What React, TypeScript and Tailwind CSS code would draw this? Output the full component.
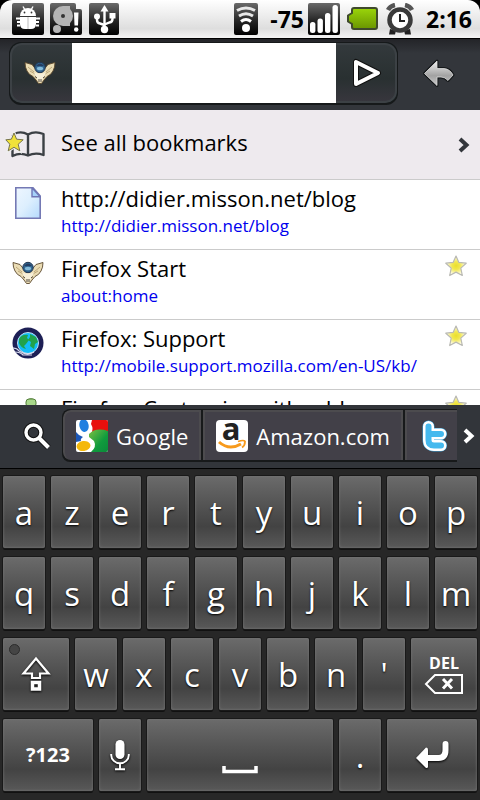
import type { ReactNode } from "react";
import clsx from "clsx";

type BookmarkItem = {
  title: string;
  href: string;
  url?: string;
  icon: ReactNode;
  starred?: boolean;
};

type KeyDef = {
  label: string;
  span?: string;
  content?: ReactNode;
};

const BADGE_STOPS = (
  <>
    <stop offset="0" stopColor="#6a6a6a" />
    <stop offset="0.55" stopColor="#262626" />
    <stop offset="1" stopColor="#000" />
  </>
);

const DebugIcon = () => (
  <svg viewBox="0 0 32 32" className="h-8 w-8">
    <linearGradient id="badge-debug" x1="0" y1="0" x2="0" y2="1">
      {BADGE_STOPS}
    </linearGradient>
    <rect width="32" height="32" rx="2" fill="url(#badge-debug)" />
    <g stroke="#fff" strokeWidth="1.4">
      <path d="M11 3.500l2 3.500M21 3.500l-2 3.500" />
      <path d="M4 15.500h4M5 19h3M5 22.500h3M28 15.500h-4M27 19h-3M27 22.500h-3" strokeWidth="1.800" />
    </g>
    <path d="M8 13a8 8 0 0 1 16 0z" fill="#fff" />
    <path d="M8 14h16v7q0 5-5 5h-6q-5 0-5-5z" fill="#fff" />
    <path d="M16 14v12" stroke="#bbb" />
    <circle cx="12.500" cy="9.500" r="0.900" fill="#333" />
    <circle cx="19.500" cy="9.500" r="0.900" fill="#333" />
  </svg>
);

const StorageIcon = () => (
  <svg viewBox="0 0 32 32" className="h-8 w-8">
    <linearGradient id="badge-storage" x1="0" y1="0" x2="0" y2="1">
      {BADGE_STOPS}
    </linearGradient>
    <path
      d="M2 0h22a2 2 0 0 1 2 2v4h4a2 2 0 0 1 2 2v22a2 2 0 0 1-2 2H2a2 2 0 0 1-2-2V2a2 2 0 0 1 2-2z"
      fill="url(#badge-storage)"
    />
    <circle cx="13" cy="13" r="10" fill="#b4b4b4" />
    <path d="M13 3h7v20h-7z" fill="#b4b4b4" />
    <circle cx="13" cy="13" r="2" fill="#333" />
    <circle cx="7" cy="26" r="4" fill="#b4b4b4" />
    <path d="M24 9.500h4.500l-.5 13h-3.500z" fill="#fff" />
    <circle cx="26.200" cy="26.500" r="2.200" fill="#fff" />
  </svg>
);

const UsbIcon = () => (
  <svg viewBox="0 0 32 32" className="h-8 w-8">
    <linearGradient id="badge-usb" x1="0" y1="0" x2="0" y2="1">
      {BADGE_STOPS}
    </linearGradient>
    <rect x="1" width="30" height="32" rx="2" fill="url(#badge-usb)" />
    <g stroke="#fff" strokeWidth="2.400" fill="none">
      <path d="M16.500 7v20" />
      <path d="M9 14v3q0 3 3 3.500l4.500 1.500M24.500 13v3q0 3-3 3.500l-5 2" />
    </g>
    <path d="M12.500 8.500l4-6.500 4 6.500z" fill="#fff" />
    <circle cx="9" cy="13.500" r="3" fill="#fff" />
    <path d="M21.500 10h6v5.500h-6z" fill="#fff" />
    <circle cx="16.500" cy="26.500" r="3.700" fill="#fff" />
  </svg>
);

const WifiIcon = () => (
  <svg viewBox="0 0 24 32" className="h-8 w-6">
    <linearGradient id="badge-wifi" x1="0" y1="0" x2="0" y2="1">
      {BADGE_STOPS}
    </linearGradient>
    <rect width="24" height="32" rx="2" fill="url(#badge-wifi)" />
    <g stroke="#e8e8e8" strokeWidth="3" fill="none">
      <path d="M3 7.500q9-5 18 0" />
      <path d="M5 13q7-4.500 14 0" />
      <path d="M7 18.500q5-4 10 0" stroke="#fff" />
    </g>
    <circle cx="12" cy="25" r="4" fill="#fff" />
  </svg>
);

const SignalIcon = () => (
  <svg viewBox="0 0 32 32" className="h-8 w-8">
    <linearGradient id="badge-signal" x1="0" y1="0" x2="0" y2="1">
      {BADGE_STOPS}
    </linearGradient>
    <rect width="32" height="32" rx="2" fill="url(#badge-signal)" />
    <g fill="#fff">
      <rect x="2" y="19" width="5.400" height="11" rx="2.500" />
      <rect x="9.500" y="15.500" width="5.400" height="14.500" rx="2.500" />
      <rect x="17" y="10" width="5.400" height="20" rx="2.500" />
      <rect x="24.500" y="2" width="5.400" height="28" rx="2.500" />
    </g>
  </svg>
);

const BatteryIcon = () => (
  <svg viewBox="0 0 32 32" className="h-8 w-8">
    <linearGradient id="battery" x1="0" y1="0" x2="0" y2="1">
      <stop offset="0" stopColor="#9bd60b" />
      <stop offset="1" stopColor="#6a9500" />
    </linearGradient>
    <path
      d="M8 5h21q2 0 2 2v17q0 2-2 2H8q-2 0-2-2v-3l-4-2.500v-6L6 10V7q0-2 2-2z"
      fill="url(#battery)"
      stroke="#3f4a2c"
      strokeWidth="2"
    />
  </svg>
);

const AlarmIcon = () => (
  <svg viewBox="0 0 32 32" className="h-8 w-8">
    <path d="M6 26l-1 5.500h6l1-4M26 26l1 5.500h-6l-1-4" fill="#222" />
    <path d="M4 7q2-4 7-5M28 7q-2-4-7-5" stroke="#555" strokeWidth="4.500" fill="none" />
    <circle cx="16" cy="17" r="10.500" fill="#fff" stroke="#3a3a3a" strokeWidth="4.500" />
    <path d="M16 11v7h5" stroke="#222" strokeWidth="2" fill="none" />
  </svg>
);

const WingsIcon = () => (
  <svg viewBox="0 0 32 24" className="h-6 w-8">
    <path
      d="M1 1.500l7 2 4 5q4 3 8 0l4-5 7-2q0 5-2 8.500-2 4-6 5.500L20 19l-2.500 3.500h-3L12 19l-3-3.500Q5 14 3 10 1 6.500 1 1.500z"
      fill="#eadcb4"
      stroke="#5a472c"
      strokeWidth="0.900"
    />
    <path
      d="M4 6l6 5M6 10l5 3M28 6l-6 5M26 10l-5 3"
      stroke="#b8a174"
      strokeWidth="0.900"
    />
    <circle cx="16" cy="6.500" r="5.200" fill="#31648e" stroke="#233650" />
    <path d="M12 5q4-5 8 0z" fill="#243d61" />
    <ellipse cx="16" cy="7.500" rx="3.200" ry="1.800" fill="#83bad9" />
    <path d="M10 11.500q6 2 12 0l-3 6-1.500 3.500h-3L13 17.500z" fill="#f7efd8" />
    <path d="M11 15.500l2 1.500M21 15.500l-2 1.500M15 18v3M17 18v3" stroke="#514737" />
  </svg>
);

const PlayIcon = () => (
  <svg viewBox="0 0 32 32" className="h-8 w-8">
    <path d="M6 5v22L28 16z" fill="none" stroke="#111" strokeWidth="6" strokeLinejoin="round" />
    <path d="M6 5v22L28 16z" fill="none" stroke="#fff" strokeWidth="4" strokeLinejoin="round" />
  </svg>
);

const BackIcon = () => (
  <svg viewBox="0 0 32 32" className="h-8 w-8">
    <linearGradient id="back" x1="0" y1="0" x2="0" y2="1">
      <stop offset="0" stopColor="#f0f0f0" />
      <stop offset="0.600" stopColor="#a2a2a2" />
      <stop offset="1" stopColor="#c8c8c8" />
    </linearGradient>
    <path
      d="M1.500 15.500L14 3v7.500h7q6 .5 9 6.500l-5 5.500q-3-3.500-7-3.500h-4v8.500z"
      fill="#15181a"
      stroke="#15181a"
      strokeWidth="3"
      strokeLinejoin="round"
    />
    <path
      d="M1.500 15.500L14 3v7.500h7q6 .5 9 6.500l-5 5.500q-3-3.500-7-3.500h-4v8.500z"
      fill="url(#back)"
      stroke="#dcdcdc"
      strokeWidth="0.800"
      strokeLinejoin="round"
    />
  </svg>
);

const BookmarksIcon = () => (
  <svg viewBox="0 0 42 28" className="h-7 w-[42px]">
    <path
      d="M9 3q7-3.500 14 .5Q30-.5 38.500 3v21q-8-3-15.500.5Q15.500 21 7.500 25V5zM23 3.500V24"
      fill="none"
      stroke="#3b4044"
      strokeWidth="2.400"
      strokeLinejoin="round"
    />
    <path
      d="M9 2l2.600 6.200 6.600.6-5 4.400 1.600 6.600L9 16.300l-5.800 3.500 1.600-6.600-5-4.400 6.600-.6z"
      fill="#f2e53c"
      stroke="#eee"
      strokeWidth="3"
    />
    <path
      d="M9 2l2.600 6.200 6.600.6-5 4.400 1.600 6.600L9 16.300l-5.800 3.500 1.600-6.600-4-4.400 5.600-.6z"
      fill="#f0e23a"
      stroke="#77734e"
      strokeWidth="1"
    />
  </svg>
);

const PageIcon = () => (
  <svg viewBox="0 0 26 32" className="h-8 w-[26px]">
    <linearGradient id="page" x1="0" y1="0" x2="1" y2="1">
      <stop offset="0" stopColor="#eef6ff" />
      <stop offset="0.500" stopColor="#ddeffe" />
      <stop offset="1" stopColor="#b5dafc" />
    </linearGradient>
    <path d="M.8.800h17.200l7.200 8.200v22.200H.8z" fill="url(#page)" stroke="#7479b4" strokeWidth="1.600" />
    <path d="M17 .800v9h8.200z" fill="#a6d2fa" stroke="#6f75b5" strokeWidth="1.400" />
  </svg>
);

const GlobeIcon = () => (
  <svg viewBox="0 0 32 32" className="h-8 w-8">
    <circle cx="16" cy="16" r="15.500" fill="#1d1f55" />
    <circle cx="16" cy="16" r="10.500" fill="#12bdf7" stroke="#bfe0f2" />
    <path
      d="M7 12q3-5 9-4l-1 3 2 2-3 4-2 2 2 3q-5-1-7-6zM18 7l6 3 2 5-3 2-1 5-4-3 1-4-3-2 2-3z"
      fill="#21a24b"
    />
    <path d="M1 21q4 0 6 3 8 5 15 1M3 25q5 0 8 3h9" fill="none" stroke="#d9dcee" strokeWidth="1.200" />
  </svg>
);

const AddonsIcon = () => (
  <svg viewBox="0 0 32 32" className="h-8 w-8">
    <path
      d="M3 13h12V4q4-4 8 0v9h5v8q-6-1-6 3t6 3v4H3z"
      fill="#9fce7c"
      stroke="#55803b"
      strokeWidth="1.500"
    />
    <rect x="14" y="2" width="10" height="8" rx="3" fill="#a9d88b" stroke="#55803b" />
  </svg>
);

const StarIcon = () => (
  <svg viewBox="0 0 24 24" className="h-6 w-6">
    <radialGradient id="star">
      <stop offset="0" stopColor="#eadf2c" />
      <stop offset="0.400" stopColor="#f1e750" />
      <stop offset="0.900" stopColor="#fdfbe0" />
    </radialGradient>
    <path
      d="M12 2l2.900 6.400 7.300.8-5.400 4.900 1.500 7.400-6.300-3.400-6.300 3.400 1.500-7.400-5.400-4.900 7.300-.8z"
      fill="url(#star)"
      stroke="#b9b9b3"
      strokeWidth="1.200"
      strokeLinejoin="round"
    />
  </svg>
);

const ChevronIcon = ({ className }: { className: string }) => (
  <svg viewBox="0 0 12 16" className={clsx("h-4 w-3", className)}>
    <path d="M2 2l6.500 6L2 14" fill="none" stroke="currentColor" strokeWidth="4" />
  </svg>
);

const SearchIcon = () => (
  <svg viewBox="0 0 28 28" className="h-7 w-7">
    <g fill="none" stroke="#111">
      <circle cx="10.500" cy="10.500" r="7.500" strokeWidth="5.500" />
      <path d="M16 16l9.500 9.500" strokeWidth="6" />
    </g>
    <g fill="none" stroke="#fff">
      <circle cx="10.500" cy="10.500" r="7.500" strokeWidth="3.400" />
      <path d="M16 16l9.500 9.500" strokeWidth="4" />
    </g>
  </svg>
);

const GoogleIcon = () => (
  <svg viewBox="0 0 32 32" className="h-8 w-8">
    <clipPath id="google-clip">
      <rect width="32" height="32" rx="2" />
    </clipPath>
    <linearGradient id="google-green" x1="0" y1="0" x2="1" y2="1">
      <stop offset="0" stopColor="#7cc043" />
      <stop offset="0.600" stopColor="#109b3d" />
      <stop offset="1" stopColor="#0b8a3a" />
    </linearGradient>
    <g clipPath="url(#google-clip)">
      <rect width="32" height="32" fill="#fff" />
      <path d="M16 0h16v14H15q3-5 0-10z" fill="#e8100c" />
      <path d="M13 14q7-7 19-3v21H15q6-5 3-11l-5-4z" fill="url(#google-green)" />
      <path d="M0 12q3 4 7 5-3 2-2 4l-5 1z" fill="#1c57b8" />
      <ellipse cx="8" cy="5.500" rx="4.600" ry="6.500" fill="#1f7fe0" transform="rotate(-12 8 5.500)" />
      <ellipse cx="7.500" cy="26" rx="7" ry="5" fill="#f4b80c" transform="rotate(-8 7.500 26)" />
    </g>
  </svg>
);

const AmazonIcon = () => (
  <svg viewBox="0 0 32 32" className="h-8 w-8">
    <rect width="32" height="32" rx="4" fill="#fff" />
    <text
      x="15"
      y="20"
      textAnchor="middle"
      className="font-['Open_Sans','Noto_Sans',sans-serif] text-[31px] font-bold"
      fill="#222"
    >
      a
    </text>
    <path d="M3 22q10 9 22 2" fill="none" stroke="#f79a1c" strokeWidth="3" />
    <path d="M22 21.500q6-2 7 0 0 4-3 6" fill="none" stroke="#f79a1c" strokeWidth="1.800" />
  </svg>
);

const TwitterIcon = () => (
  <svg viewBox="0 0 32 32" className="h-8 w-8">
    <g fill="none" strokeLinecap="round" strokeLinejoin="round">
      <path d="M10.500 6.500V20q0 5.500 5.500 5.500h7M10.500 14H23" stroke="#3aa4dc" strokeWidth="12" />
      <path d="M10.500 6.500V20q0 5.500 5.500 5.500h7M10.500 14H23" stroke="#fff" strokeWidth="11" />
      <path d="M10.500 6.500V20q0 5.500 5.500 5.500h7M10.500 14H23" stroke="#45b9ee" strokeWidth="6" />
    </g>
  </svg>
);

const ShiftIcon = () => (
  <svg viewBox="0 0 32 36" className="h-9 w-8 drop-shadow-[0_1px_1px_#000]">
    <path d="M16 2.500L3.500 17.500H12V22h8v-4.500h8.500z" fill="none" stroke="#fff" strokeWidth="2.200" />
    <rect x="12.500" y="26.500" width="7" height="6.500" fill="none" stroke="#fff" strokeWidth="3.500" />
  </svg>
);

const DeleteIcon = () => (
  <svg viewBox="0 0 40 22" className="h-[22px] w-10">
    <path d="M11 2h27v18H11l-9-9z" fill="none" stroke="#fff" strokeWidth="2" />
    <path d="M19 6l9 9.500M28 6l-9 9.500" stroke="#fff" strokeWidth="3" />
  </svg>
);

const MicIcon = () => (
  <svg viewBox="0 0 20 32" className="h-8 w-5 drop-shadow-[0_1px_1px_#000]">
    <rect x="5.500" y="1" width="9" height="19" rx="4.500" fill="#fff" />
    <path d="M1.200 15v1a8.800 8.300 0 0 0 17.600 0v-1M10 24v6M5 30.200h10" fill="none" stroke="#fff" strokeWidth="1.900" />
  </svg>
);

const SpaceIcon = () => (
  <svg viewBox="0 0 36 40" className="h-10 w-9">
    <path d="M2 31v5.500h32V31" fill="none" stroke="#fff" strokeWidth="3.500" />
  </svg>
);

const EnterIcon = () => (
  <svg viewBox="0 0 34 30" className="h-[30px] w-[34px] drop-shadow-[0_1px_1px_#000]">
    <path d="M30.500 4v6q0 8-7 8H10" fill="none" stroke="#fff" strokeWidth="6" strokeLinecap="round" />
    <path d="M1 18L11 7.500q2 0 2 2v17q0 2-2 1.500z" fill="#fff" />
  </svg>
);

const bookmarks: BookmarkItem[] = [
  {
    title: "http://didier.misson.net/blog",
    href: "http://didier.misson.net/blog",
    url: "http://didier.misson.net/blog",
    icon: <PageIcon />,
  },
  {
    title: "Firefox Start",
    href: "about:home",
    url: "about:home",
    icon: <WingsIcon />,
    starred: true,
  },
  {
    title: "Firefox: Support",
    href: "http://mobile.support.mozilla.com/en-US/kb/",
    url: "http://mobile.support.mozilla.com/en-US/kb/",
    icon: <GlobeIcon />,
    starred: true,
  },
  {
    title: "Firefox: Customize with add-ons",
    href: "#addons",
    icon: <AddonsIcon />,
    starred: true,
  },
];

const engines = [
  { name: "Google", icon: <GoogleIcon /> },
  { name: "Amazon.com", icon: <AmazonIcon /> },
  { name: "Twitter", icon: <TwitterIcon /> },
];

const letters = (row: string): KeyDef[] => row.split("").map((label) => ({ label }));

const keys: KeyDef[] = [
  ...letters("azertyuiop"),
  ...letters("qsdfghjklm"),
  {
    label: "Shift",
    span: "col-span-3",
    content: (
      <>
        <span className="absolute top-1.5 left-1.5 h-[11px] w-[11px] rounded-full border border-[#2c2c2c] bg-[#454545]" />
        <ShiftIcon />
      </>
    ),
  },
  ...letters("wxcvbn'"),
  {
    label: "Delete",
    span: "col-span-3",
    content: (
      <span className="flex flex-col items-center">
        <span className="text-base leading-5 font-bold">DEL</span>
        <DeleteIcon />
      </span>
    ),
  },
  {
    label: "?123",
    span: "col-span-4",
    content: <span className="text-xl font-bold">?123</span>,
  },
  { label: "Voice input", content: <MicIcon /> },
  { label: "Space", span: "col-span-8", content: <SpaceIcon /> },
  { label: "." },
  { label: "Enter", span: "col-span-4", content: <EnterIcon /> },
];

const StatusBar = () => (
  <div className="shrink-0 border-b border-black bg-black">
    <div className="flex h-[38px] items-center justify-between rounded-t-xl bg-linear-to-b from-white via-[#dedede] via-75% to-[#f4f4f4] pr-2 pl-3">
      <div className="flex gap-1.5">
        <DebugIcon />
        <StorageIcon />
        <UsbIcon />
      </div>
      <div className="flex items-center gap-1.5">
        <WifiIcon />
        <span className="flex items-center gap-1 pl-1.5 text-[23px] font-bold">
          -75
          <SignalIcon />
        </span>
        <BatteryIcon />
        <AlarmIcon />
        <span className="pl-1 text-[23px] font-bold">2:16</span>
      </div>
    </div>
  </div>
);

const Toolbar = () => (
  <form
    className="flex shrink-0 items-center bg-linear-to-b from-[#232428] to-[#33363b] to-20% pt-[3px] pb-[5px] pl-[9px]"
    onSubmit={(event) => event.preventDefault()}
  >
    <div className="flex h-[63px] min-w-0 flex-1 overflow-hidden rounded-xl border border-b-2 border-[#16191a] bg-[#1d2527]">
      <button
        type="button"
        aria-label="Site information"
        className="flex w-[62px] shrink-0 items-center justify-center rounded-l-xl border-2 border-r-0 border-[#3c4145] bg-linear-to-b from-[#33393c] via-[#293031] via-60% to-[#37363d] pr-1"
      >
        <WingsIcon />
      </button>
      <input
        type="text"
        aria-label="Address"
        className="min-w-0 flex-1 bg-white px-2 text-2xl text-black outline-none"
      />
      <button
        type="submit"
        aria-label="Go"
        className="flex w-[61px] shrink-0 items-center justify-center rounded-r-xl border-2 border-l-0 border-[#3c4145] bg-linear-to-b from-[#33393c] via-[#293031] via-60% to-[#37363d]"
      >
        <PlayIcon />
      </button>
    </div>
    <button type="button" aria-label="Back" className="flex w-[82px] shrink-0 items-center justify-center">
      <BackIcon />
    </button>
  </form>
);

const BookmarkRow = ({ title, href, url, icon, starred }: BookmarkItem) => (
  <li className="border-b border-[#cbcbcb]">
    <a href={href} className="flex h-[69px] pr-3">
      <span className="flex w-[55px] shrink-0 justify-center pt-[7px]">
        <span className="flex h-8 items-center">{icon}</span>
      </span>
      <span className="flex min-w-0 flex-1 flex-col pt-0.5 pl-1.5 whitespace-nowrap">
        <span className="text-[22px] leading-8">{title}</span>
        {url && <span className="text-[17px] leading-6 text-[#0000ee]">{url}</span>}
      </span>
      {starred && (
        <span className="shrink-0 pt-1">
          <StarIcon />
        </span>
      )}
    </a>
  </li>
);

const Key = ({ label, span = "col-span-2", content }: KeyDef) => (
  <button
    type="button"
    aria-label={label}
    className={clsx(
      "relative flex h-[72px] items-center justify-center rounded-xs bg-linear-to-b from-[#6b6b6b] via-[#434343] via-70% to-[#595959] shadow-[0_0_0_1px_#191919,0_2px_0_0_#111,inset_0_0_3px_#777]",
      span
    )}
  >
    {content ?? <span className="pt-0.5 text-[33px] text-shadow-[0_1px_2px_#000]">{label}</span>}
  </button>
);

export default function App() {
  return (
    <div className="flex h-screen flex-col overflow-hidden bg-white font-['Open_Sans','Noto_Sans',sans-serif] text-black">
      <StatusBar />
      <Toolbar />
      <main className="min-h-0 flex-1 overflow-hidden">
        <a href="#bookmarks" className="flex h-[70px] items-center border-b border-[#cbcbcb] bg-[#eeeaee] pr-2.5 pl-[5px]">
          <BookmarksIcon />
          <span className="flex-1 pb-1 pl-3.5 text-[22px]">See all bookmarks</span>
          <ChevronIcon className="text-[#33363b]" />
        </a>
        <ul>
          {bookmarks.map((bookmark) => (
            <BookmarkRow key={bookmark.title} {...bookmark} />
          ))}
        </ul>
      </main>
      <div className="flex shrink-0 items-center border-b border-black bg-[#32353a] pt-1 pb-1.5 text-white">
        <button type="button" aria-label="Search" className="flex w-[62px] shrink-0 items-center justify-center pl-3">
          <SearchIcon />
        </button>
        <div className="flex min-w-0 flex-1 overflow-hidden rounded-l-lg border border-r-0 border-b-2 border-[#17191a] bg-[#17191a]">
          {engines.map((engine) => (
            <button
              type="button"
              key={engine.name}
              className="mr-0.5 flex h-[50px] shrink-0 items-center gap-2 border-2 border-b-0 border-[#4c4b4e] bg-[#424048] px-[11px] text-[22px] first:rounded-l-lg"
            >
              {engine.icon}
              {engine.name}
            </button>
          ))}
        </div>
        <button type="button" aria-label="More search engines" className="flex w-[23px] shrink-0 justify-center">
          <ChevronIcon className="text-white" />
        </button>
      </div>
      <div className="grid shrink-0 grid-cols-20 gap-x-1.5 gap-y-[9px] bg-[#272727] px-[3px] pt-[7px] pb-[9px] text-white">
        {keys.map((key) => (
          <Key key={key.label} {...key} />
        ))}
      </div>
    </div>
  );
}
